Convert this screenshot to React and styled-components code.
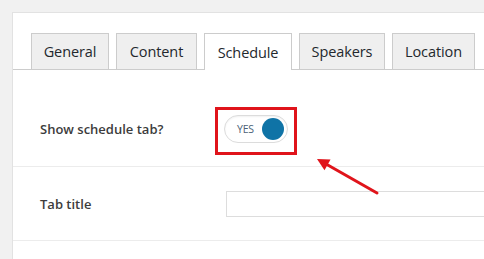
import styled, { createGlobalStyle } from 'styled-components';

const GlobalStyle = createGlobalStyle`
  body {
    margin: 0;
    background: #f1f1f1;
    font-family: "Open Sans", "Noto Sans", sans-serif;
    overflow: hidden;
  }
`;

const Page = styled.div`
  padding: 12px 0 0 12px;
  height: 259px;
  box-sizing: border-box;
`;

const Panel = styled.div`
  position: relative;
  background: #fff;
  border-top: 1px solid #e2e2e2;
  border-left: 1px solid #e2e2e2;
  height: 100%;
  padding-top: 20px;
  box-sizing: border-box;
`;

const TabBar = styled.nav`
  display: flex;
  gap: 7px;
  padding-left: 18px;
  border-bottom: 1px solid #cccccc;
  height: 36px;
`;

const Tab = styled.div`
  display: flex;
  align-items: center;
  justify-content: center;
  width: ${(p) => p.$w}px;
  height: ${(p) => (p.$active ? 37 : 36)}px;
  box-sizing: border-box;
  border: 1px solid #cccccc;
  border-bottom: none;
  background: ${(p) => (p.$active ? '#ffffff' : '#efefef')};
  color: #23282d;
  font-size: 14.5px;
  font-weight: 500;
  letter-spacing: -0.1px;
`;

const Form = styled.div`
  padding-top: 21px;
`;

const Row = styled.div`
  display: flex;
  align-items: center;
  padding: ${(p) => p.$pad};
  border-bottom: 1px solid #ececec;
`;

const Label = styled.div`
  width: 184px;
  flex-shrink: 0;
  padding-left: 27px;
  color: #3c3c3c;
  font-size: 13px;
  font-weight: 600;
`;

const Control = styled.div`
  position: relative;
  flex: 1;
  display: flex;
  align-items: center;
`;

const Toggle = styled.div`
  width: 64px;
  height: 28px;
  box-sizing: border-box;
  border: 1px solid #dcdcdc;
  border-radius: 14px;
  background: #fff;
  display: flex;
  align-items: center;
  justify-content: space-between;
  padding: 0 3px 0 12px;
  box-shadow: inset 0 1px 2px rgba(0, 0, 0, 0.06);
`;

const ToggleText = styled.span`
  font-size: 10.5px;
  color: #4b6277;
  letter-spacing: -0.2px;
`;

const Knob = styled.span`
  width: 22px;
  height: 22px;
  border-radius: 50%;
  background: #0f73a6;
`;

const Highlight = styled.div`
  position: absolute;
  left: -9px;
  top: -8px;
  width: 82px;
  height: 48px;
  box-sizing: border-box;
  border: 3px solid #e0141b;
`;

const Arrow = styled.svg`
  position: absolute;
  left: 290px;
  top: 134px;
`;

const Input = styled.div`
  margin-left: 2px;
  flex: 1;
  height: 26px;
  box-sizing: border-box;
  border: 1px solid #dddddd;
  border-right: none;
  background: #fff;
`;

const tabs = [
  { name: 'General', w: 78 },
  { name: 'Content', w: 81 },
  { name: 'Schedule', w: 88, active: true },
  { name: 'Speakers', w: 86 },
  { name: 'Location', w: 83 },
];

export default function App() {
  return (
    <Page>
      <GlobalStyle />
      <Panel>
        <TabBar>
          {tabs.map((t) => (
            <Tab key={t.name} $w={t.w} $active={t.active}>
              {t.name}
            </Tab>
          ))}
        </TabBar>
        <Form>
          <Row $pad="24px 0 23px">
            <Label>Show schedule tab?</Label>
            <Control>
              <Toggle>
                <ToggleText>YES</ToggleText>
                <Knob />
              </Toggle>
              <Highlight />
            </Control>
          </Row>
          <Row $pad="24px 0 23px">
            <Label>Tab title</Label>
            <Control>
              <Input />
            </Control>
          </Row>
        </Form>
        {/* flecha roja de anotación */}
        <Arrow width="80" height="56" viewBox="0 0 80 56">
          <line x1="74" y1="46" x2="23" y2="17" stroke="#e0141b" strokeWidth="3" strokeLinecap="round" />
          <polygon points="14,12 27.5,12.5 21.5,23.3" fill="#e0141b" />
        </Arrow>
      </Panel>
    </Page>
  );
}
